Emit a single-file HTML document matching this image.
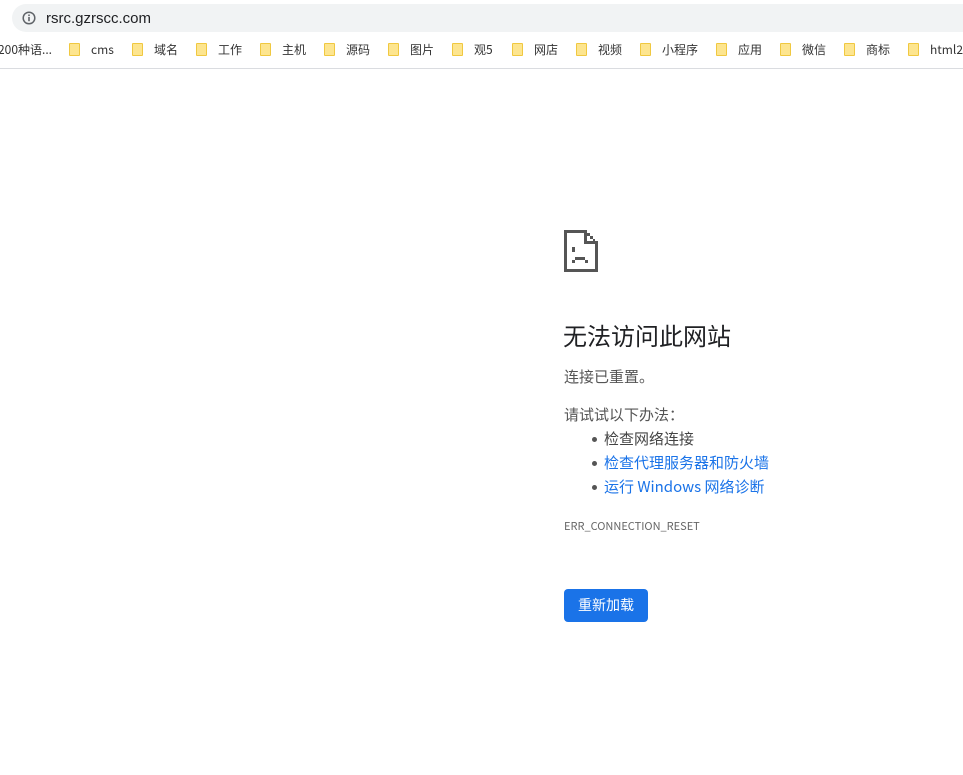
<!DOCTYPE html>
<html><head><meta charset="utf-8"><style>
*{margin:0;padding:0;box-sizing:border-box}
body{width:963px;height:775px;background:#fff;font-family:"Noto Sans CJK SC","Liberation Sans",sans-serif;position:relative;overflow:hidden;color:#333}
.addr{position:absolute;left:12px;top:4px;width:970px;height:28px;background:#f1f3f4;border-radius:14px}
.addr .t{position:absolute;left:34px;top:6px;font-size:15px;color:#202124;font-family:"Liberation Sans",sans-serif}
.bm{position:absolute;top:41px;font-size:12px;line-height:18px;color:#333;white-space:nowrap}
.f{position:absolute;top:43px;width:11px;height:13px;background:#fde58f;border:1px solid #f0c840;border-radius:1px}
.line{position:absolute;left:0;top:68px;width:963px;height:1px;background:#dadce0}
.abs{position:absolute;white-space:nowrap}
.li{position:absolute;font-size:15px;line-height:20px}
.li:before{content:"";position:absolute;left:-12px;top:8px;width:5px;height:5px;border-radius:50%;background:#555}
</style></head><body>
<div class="addr">
<svg style="position:absolute;left:10px;top:7px" width="14" height="14" viewBox="0 0 14 14"><circle cx="7" cy="7" r="5.8" fill="none" stroke="#5f6368" stroke-width="1.5"/><rect x="6.2" y="6" width="1.6" height="4.2" fill="#5f6368"/><rect x="6.2" y="3.5" width="1.6" height="1.6" fill="#5f6368"/></svg>
<div class="t">rsrc.gzrscc.com</div></div>
<div class="bm" style="left:-2px">200种语...</div>
<div class="f" style="left:69px"></div><div class="bm" style="left:91px">cms</div>
<div class="f" style="left:132px"></div><div class="bm" style="left:154px">域名</div>
<div class="f" style="left:196px"></div><div class="bm" style="left:218px">工作</div>
<div class="f" style="left:260px"></div><div class="bm" style="left:282px">主机</div>
<div class="f" style="left:324px"></div><div class="bm" style="left:346px">源码</div>
<div class="f" style="left:388px"></div><div class="bm" style="left:410px">图片</div>
<div class="f" style="left:452px"></div><div class="bm" style="left:474px">观5</div>
<div class="f" style="left:512px"></div><div class="bm" style="left:534px">网店</div>
<div class="f" style="left:576px"></div><div class="bm" style="left:598px">视频</div>
<div class="f" style="left:640px"></div><div class="bm" style="left:662px">小程序</div>
<div class="f" style="left:716px"></div><div class="bm" style="left:738px">应用</div>
<div class="f" style="left:780px"></div><div class="bm" style="left:802px">微信</div>
<div class="f" style="left:844px"></div><div class="bm" style="left:866px">商标</div>
<div class="f" style="left:908px"></div><div class="bm" style="left:930px">html2</div>
<div class="line"></div>
<svg class="abs" style="left:564px;top:230px" width="34" height="42" viewBox="0 0 34 42" fill="#555">
<rect x="0" y="0" width="3" height="42"/><rect x="0" y="0" width="23" height="3"/><rect x="0" y="39" width="34" height="3"/><rect x="31" y="11" width="3" height="31"/>
<rect x="20" y="0" width="3" height="14"/><rect x="20" y="11" width="14" height="3"/><rect x="23" y="3" width="3" height="3"/><rect x="26" y="6" width="3" height="3"/><rect x="29" y="9" width="2" height="2"/>
<rect x="8" y="17" width="3" height="5"/><rect x="8" y="30" width="3" height="3"/><rect x="11" y="27" width="10" height="3"/><rect x="21" y="30" width="3" height="3"/>
</svg>
<div class="abs" style="left:563px;top:318px;font-size:24px;line-height:34px;color:#202124">无法访问此网站</div>
<div class="abs" style="left:564px;top:367px;font-size:15px;line-height:20px;color:#555">连接已重置。</div>
<div class="abs" style="left:564px;top:405px;font-size:15px;line-height:20px;color:#555">请试试以下办法：</div>
<div class="li" style="top:429px;left:604px;color:#444">检查网络连接</div>
<div class="li" style="top:453px;left:604px;color:#1a73e8">检查代理服务器和防火墙</div>
<div class="li" style="top:477px;left:604px;color:#1a73e8">运行 Windows 网络诊断</div>
<div class="abs" style="left:564px;top:518px;font-size:11px;line-height:16px;color:#666">ERR_CONNECTION_RESET</div>
<div class="abs" style="left:564px;top:589px;width:84px;height:33px;background:#1a73e8;border-radius:4px;color:#fff;font-size:14px;text-align:center;line-height:33px">重新加载</div>
</body></html>
